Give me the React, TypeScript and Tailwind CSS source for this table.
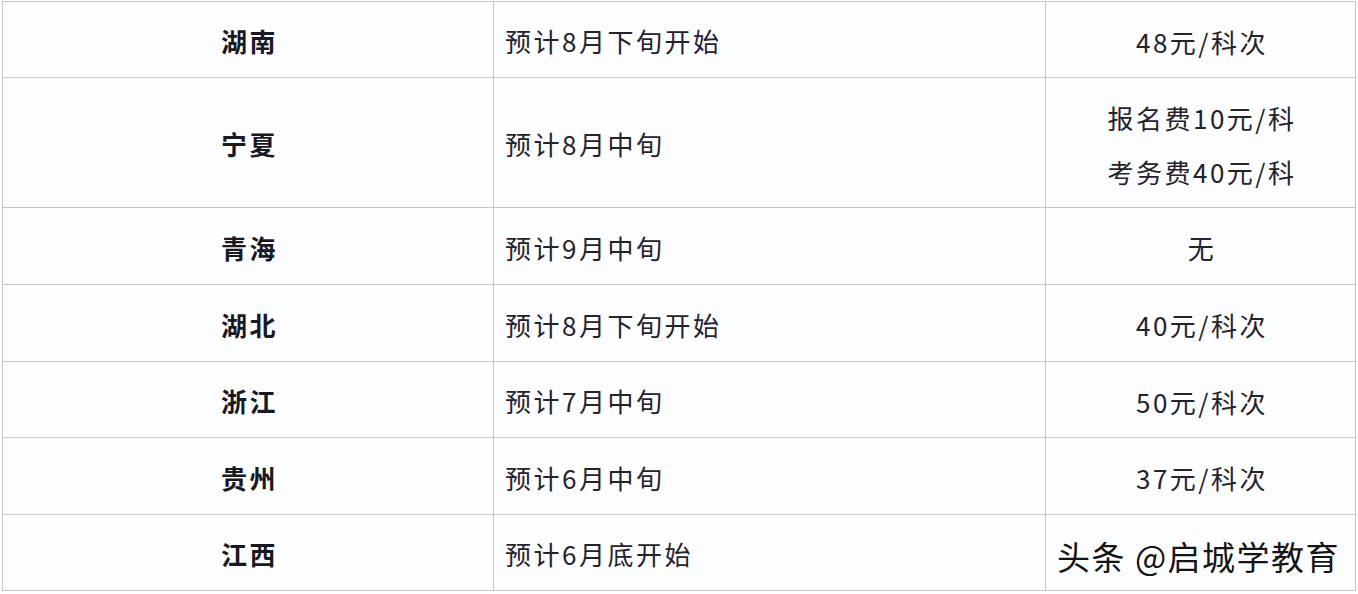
import React from "react";

const rows: { p: string; t: string; f: string[]; h: string }[] = [
  { p: "湖南", t: "预计8月下旬开始", f: ["48元/科次"], h: "h-[76px]" },
  { p: "宁夏", t: "预计8月中旬", f: ["报名费10元/科", "考务费40元/科"], h: "h-[130px]" },
  { p: "青海", t: "预计9月中旬", f: ["无"], h: "h-[77px]" },
  { p: "湖北", t: "预计8月下旬开始", f: ["40元/科次"], h: "h-[77px]" },
  { p: "浙江", t: "预计7月中旬", f: ["50元/科次"], h: "h-[76px]" },
  { p: "贵州", t: "预计6月中旬", f: ["37元/科次"], h: "h-[77px]" },
  { p: "江西", t: "预计6月底开始", f: [""], h: "h-[76px]" },
];

export default function App() {
  return (
    <div
      className="relative w-[1358px] h-[594px] bg-white overflow-hidden"
      style={{ fontFamily: '"Noto Sans CJK SC", "Noto Sans", sans-serif' }}
    >
      <table className="ml-[2px] mt-[1px] border-collapse bg-[#fcfdff] text-[26px] tracking-[2.5px] text-[#26222c] table-fixed w-[1353px]">
        <colgroup>
          <col className="w-[491px]" />
          <col className="w-[552px]" />
          <col className="w-[310px]" />
        </colgroup>
        <tbody>
          {rows.map((r, i) => (
            <tr key={i} className={r.h}>
              <td className="border border-[#c6c7cc] text-center font-bold text-[#1a1822] pt-[2px] pl-[3px] align-middle">
                {r.p}
              </td>
              <td className="border border-[#c6c7cc] pl-[11px] pt-[2px] align-middle">{r.t}</td>
              <td className="border border-[#c6c7cc] text-center pt-[3px] pl-[3px] align-middle">
                <div className="flex flex-col gap-[17px] items-center">
                  {r.f.map((x, j) => (
                    <div key={j} className="leading-[37px]">{x}</div>
                  ))}
                </div>
              </td>
            </tr>
          ))}
        </tbody>
      </table>
      <div
        className="absolute left-[1057px] top-[533px] text-[33px] tracking-[1.5px] leading-[46px] text-[#141414] whitespace-nowrap"
        style={{ textShadow: "2px 2px 0 #ffffff, -1px -1px 0 #ffffff" }}
      >
        头条 @启城学教育
      </div>
    </div>
  );
}
